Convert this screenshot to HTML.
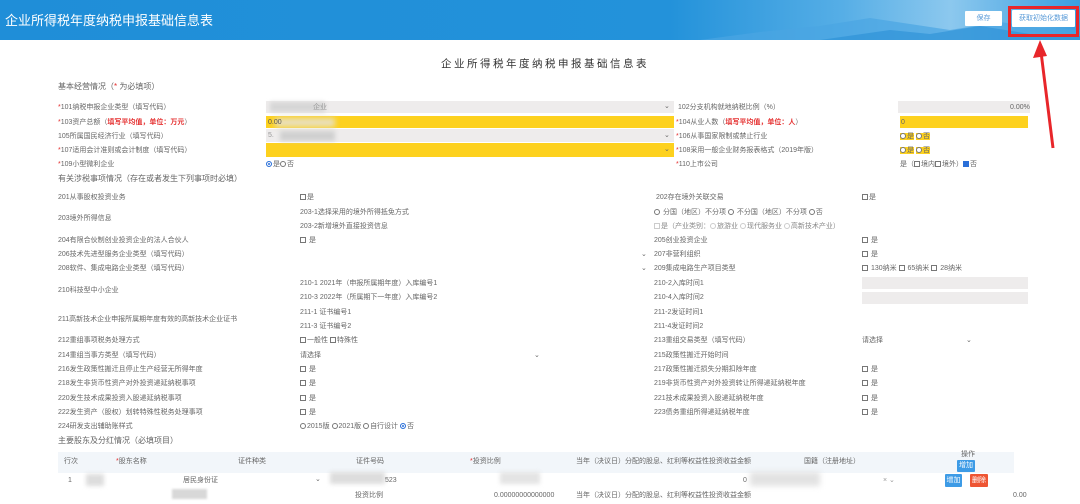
<!DOCTYPE html>
<html><head><meta charset="utf-8"><style>
*{margin:0;padding:0;box-sizing:border-box}
body{width:1080px;height:504px;overflow:hidden;background:#fff;position:relative;font-family:"Liberation Sans","Noto Sans CJK SC",sans-serif;color:#555}
.t{position:absolute;font-size:7px;line-height:10px;white-space:nowrap;color:#666}
.r{color:#e53030}
.b{position:absolute}
.g{background:#eeecec}
.y{background:#fdd11e}
.cb{display:inline-block;width:6px;height:6px;border:1px solid #777;vertical-align:-1px;margin-right:1px;background:#fff}
.rd{display:inline-block;width:6px;height:6px;border:1px solid #777;border-radius:50%;vertical-align:-1px;margin-right:1px;background:#fff}
.rd.on{background:#2a6fd8;border-color:#2a6fd8;box-shadow:inset 0 0 0 1px #fff}
.chev{position:absolute;font-size:7px;color:#666;line-height:10px}
.btn{position:absolute;color:#fff;font-size:7px;line-height:13px;text-align:center;border-radius:1px}
</style></head><body>
<div class="b" style="left:0;top:0;width:1080px;height:40px;background:linear-gradient(90deg,#1f8ed8 0%,#2392da 62%,#56aee6 78%,#8cc8ee 88%,#3a9ee0 100%)"></div>
<svg class="b" style="left:700px;top:0" width="380" height="40"><path d="M0 40 L60 32 L120 26 L170 18 L210 24 L250 30 L300 22 L340 28 L380 30 L380 40Z" fill="#4aa5e2" opacity=".7"/><path d="M120 40 L190 30 L230 34 L280 26 L330 34 L380 36 L380 40Z" fill="#2a8fd6" opacity=".6"/></svg>
<div class="t" style="left:5px;top:12px;font-size:13px;line-height:17px;color:#fff">企业所得税年度纳税申报基础信息表</div>
<div class="btn" style="left:965px;top:11px;width:37px;height:15px;background:#fff;color:#5a9bd8;line-height:15px">保存</div>
<div class="btn" style="left:1012px;top:10px;width:63px;height:17px;background:#fff;color:#5a9bd8;line-height:17px">获取初始化数据</div>
<div class="b" style="left:1008px;top:6px;width:71px;height:31px;border:3px solid #e8262a"></div>
<svg class="b" style="left:1020px;top:36px" width="60" height="120"><path d="M20 8 L33 112" stroke="#e8262a" stroke-width="3"/><path d="M20 4 L13 22 L27 20Z" fill="#e8262a"/></svg>

<div class="t" style="left:441px;top:58px;font-size:10.5px;line-height:13px;color:#333;letter-spacing:2.5px">企业所得税年度纳税申报基础信息表</div>
<div class="t" style="left:58px;top:82px;font-size:8px">基本经营情况（<span class="r">*</span> 为必填项）</div>

<div class="b g" style="left:266px;top:101px;width:408px;height:12px"></div>
<div class="b y" style="left:266px;top:116px;width:408px;height:12px"></div>
<div class="b g" style="left:266px;top:129px;width:408px;height:13px"></div>
<div class="b y" style="left:266px;top:143px;width:408px;height:14px"></div>
<div class="b" style="left:270px;top:102px;width:55px;height:10px;background:#d6d6d6;filter:blur(2px)"></div>
<div class="b" style="left:275px;top:118px;width:60px;height:9px;background:#e8e0c0;filter:blur(3px)"></div>
<div class="b" style="left:280px;top:131px;width:55px;height:10px;background:#d0d0d0;filter:blur(2px)"></div>
<div class="t" style="left:313px;top:103px;color:#999">企业</div>
<div class="t" style="left:268px;top:118px;color:#555">0.00</div>
<div class="t" style="left:268px;top:131px;color:#999">5.</div>
<div class="chev" style="left:664px;top:102px">⌄</div><div class="chev" style="left:664px;top:131px">⌄</div><div class="chev" style="left:664px;top:145px">⌄</div>
<div class="t" style="left:266px;top:160px"><span class="rd on"></span>是<span class="rd"></span>否</div>

<div class="t" style="left:58px;top:103px"><span class="r">*</span>101纳税申报企业类型（填写代码）</div>
<div class="t" style="left:58px;top:118px"><span class="r">*</span>103资产总额（<b class="r">填写平均值，单位：万元</b>）</div>
<div class="t" style="left:58px;top:132px">105所属国民经济行业（填写代码）</div>
<div class="t" style="left:58px;top:146px"><span class="r">*</span>107适用会计准则或会计制度（填写代码）</div>
<div class="t" style="left:58px;top:160px"><span class="r">*</span>109小型微利企业</div>

<div class="t" style="left:678px;top:103px">102分支机构就地纳税比例（%）</div>
<div class="t" style="left:676px;top:118px"><span class="r">*</span>104从业人数（<b class="r">填写平均值，单位：人</b>）</div>
<div class="t" style="left:676px;top:132px"><span class="r">*</span>106从事国家限制或禁止行业</div>
<div class="t" style="left:676px;top:146px"><span class="r">*</span>108采用一般企业财务报表格式（2019年版）</div>
<div class="t" style="left:676px;top:160px"><span class="r">*</span>110上市公司</div>
<div class="b g" style="left:898px;top:101px;width:132px;height:12px"></div>
<div class="t" style="left:1010px;top:103px">0.00%</div>
<div class="b y" style="left:900px;top:116px;width:128px;height:12px"></div>
<div class="t" style="left:901px;top:118px">0</div>
<div class="t" style="left:900px;top:132px"><span style="background:#fdd11e"><span class="rd"></span>是</span> <span style="background:#fdd11e"><span class="rd"></span>否</span></div>
<div class="t" style="left:900px;top:146px"><span style="background:#fdd11e"><span class="rd"></span>是</span> <span style="background:#fdd11e"><span class="rd"></span>否</span></div>
<div class="t" style="left:900px;top:160px">是（<span class="cb"></span>境内<span class="cb"></span>境外）<span class="cb" style="background:#2a6fd8;border-color:#2a6fd8"></span>否</div>

<div class="t" style="left:58px;top:174px;font-size:8px">有关涉税事项情况（存在或者发生下列事项时必填）</div>

<div class="t" style="left:58px;top:193px">201从事股权投资业务</div>
<div class="t" style="left:300px;top:193px"><span class="cb"></span>是</div>
<div class="t" style="left:58px;top:214px">203境外所得信息</div>
<div class="t" style="left:300px;top:208px">203-1选择采用的境外所得抵免方式</div>
<div class="t" style="left:300px;top:222px">203-2新增境外直接投资信息</div>
<div class="t" style="left:58px;top:236px">204有限合伙制创业投资企业的法人合伙人</div>
<div class="t" style="left:300px;top:236px"><span class="cb"></span> 是</div>
<div class="t" style="left:58px;top:250px">206技术先进型服务企业类型（填写代码）</div>
<div class="t" style="left:58px;top:264px">208软件、集成电路企业类型（填写代码）</div>
<div class="t" style="left:58px;top:286px">210科技型中小企业</div>
<div class="t" style="left:300px;top:279px">210-1 2021年（申报所属期年度）入库编号1</div>
<div class="t" style="left:300px;top:293px">210-3 2022年（所属期下一年度）入库编号2</div>
<div class="t" style="left:58px;top:315px">211高新技术企业申报所属期年度有效的高新技术企业证书</div>
<div class="t" style="left:300px;top:308px">211-1 证书编号1</div>
<div class="t" style="left:300px;top:322px">211-3 证书编号2</div>
<div class="t" style="left:58px;top:336px">212重组事项税务处理方式</div>
<div class="t" style="left:300px;top:336px"><span class="cb"></span>一般性 <span class="cb"></span>特殊性</div>
<div class="t" style="left:58px;top:351px">214重组当事方类型（填写代码）</div>
<div class="t" style="left:300px;top:351px">请选择</div>
<div class="chev" style="left:534px;top:351px">⌄</div>
<div class="t" style="left:58px;top:365px">216发生政策性搬迁且停止生产经营无所得年度</div>
<div class="t" style="left:300px;top:365px"><span class="cb"></span> 是</div>
<div class="t" style="left:58px;top:379px">218发生非货币性资产对外投资递延纳税事项</div>
<div class="t" style="left:300px;top:379px"><span class="cb"></span> 是</div>
<div class="t" style="left:58px;top:394px">220发生技术成果投资入股递延纳税事项</div>
<div class="t" style="left:300px;top:394px"><span class="cb"></span> 是</div>
<div class="t" style="left:58px;top:408px">222发生资产（股权）划转特殊性税务处理事项</div>
<div class="t" style="left:300px;top:408px"><span class="cb"></span> 是</div>
<div class="t" style="left:58px;top:422px">224研发支出辅助账样式</div>
<div class="t" style="left:300px;top:422px"><span class="rd"></span>2015版 <span class="rd"></span>2021版 <span class="rd"></span>自行设计 <span class="rd on"></span>否</div>

<div class="t" style="left:656px;top:193px">202存在境外关联交易</div>
<div class="t" style="left:862px;top:193px"><span class="cb"></span>是</div>
<div class="t" style="left:654px;top:208px"><span class="rd"></span> 分国（地区）不分项 <span class="rd"></span> 不分国（地区）不分项 <span class="rd"></span>否</div>
<div class="t" style="left:654px;top:222px;color:#888"><span class="cb" style="border-color:#ccc"></span>是（产业类别：<span class="rd" style="border-color:#ccc"></span>旅游业 <span class="rd" style="border-color:#ccc"></span>现代服务业 <span class="rd" style="border-color:#ccc"></span>高新技术产业）</div>
<div class="t" style="left:654px;top:236px">205创业投资企业</div>
<div class="t" style="left:862px;top:236px"><span class="cb"></span> 是</div>
<div class="chev" style="left:641px;top:250px">⌄</div><div class="chev" style="left:641px;top:264px">⌄</div>
<div class="t" style="left:654px;top:250px">207非营利组织</div>
<div class="t" style="left:862px;top:250px"><span class="cb"></span> 是</div>
<div class="t" style="left:654px;top:264px">209集成电路生产项目类型</div>
<div class="t" style="left:862px;top:264px"><span class="cb"></span> 130纳米 <span class="cb"></span> 65纳米 <span class="cb"></span> 28纳米</div>
<div class="t" style="left:654px;top:279px">210-2入库时间1</div>
<div class="b g" style="left:862px;top:277px;width:166px;height:12px"></div>
<div class="t" style="left:654px;top:293px">210-4入库时间2</div>
<div class="b g" style="left:862px;top:292px;width:166px;height:12px"></div>
<div class="t" style="left:654px;top:308px">211-2发证时间1</div>
<div class="t" style="left:654px;top:322px">211-4发证时间2</div>
<div class="t" style="left:654px;top:336px">213重组交易类型（填写代码）</div>
<div class="t" style="left:862px;top:336px">请选择</div>
<div class="chev" style="left:966px;top:336px">⌄</div>
<div class="t" style="left:654px;top:351px">215政策性搬迁开始时间</div>
<div class="t" style="left:654px;top:365px">217政策性搬迁损失分期扣除年度</div>
<div class="t" style="left:862px;top:365px"><span class="cb"></span> 是</div>
<div class="t" style="left:654px;top:379px">219非货币性资产对外投资转让所得递延纳税年度</div>
<div class="t" style="left:862px;top:379px"><span class="cb"></span> 是</div>
<div class="t" style="left:654px;top:394px">221技术成果投资入股递延纳税年度</div>
<div class="t" style="left:862px;top:394px"><span class="cb"></span> 是</div>
<div class="t" style="left:654px;top:408px">223债务重组所得递延纳税年度</div>
<div class="t" style="left:862px;top:408px"><span class="cb"></span> 是</div>

<div class="t" style="left:58px;top:435px;font-size:8px;line-height:12px">主要股东及分红情况（必填项目）</div>
<div class="b" style="left:58px;top:452px;width:956px;height:21px;background:#f2f6fa"></div>
<div class="t" style="left:64px;top:457px">行次</div>
<div class="t" style="left:116px;top:457px"><span class="r">*</span>股东名称</div>
<div class="t" style="left:238px;top:457px">证件种类</div>
<div class="t" style="left:356px;top:457px">证件号码</div>
<div class="t" style="left:470px;top:457px"><span class="r">*</span>投资比例</div>
<div class="t" style="left:576px;top:457px">当年（决议日）分配的股息、红利等权益性投资收益金额</div>
<div class="t" style="left:804px;top:457px">国籍（注册地址）</div>
<div class="t" style="left:961px;top:450px">操作</div>
<div class="btn" style="left:957px;top:460px;width:18px;height:12px;background:#3d9be6;line-height:12px">增加</div>
<div class="t" style="left:68px;top:476px">1</div>
<div class="b" style="left:86px;top:474px;width:18px;height:12px;background:#ddd;filter:blur(2px)"></div>
<div class="t" style="left:183px;top:476px">居民身份证</div>
<div class="chev" style="left:315px;top:475px">⌄</div>
<div class="b" style="left:330px;top:472px;width:55px;height:12px;background:#ddd;filter:blur(2px)"></div>
<div class="t" style="left:385px;top:476px">523</div>
<div class="b" style="left:500px;top:472px;width:40px;height:12px;background:#e4e4e4;filter:blur(2px)"></div>
<div class="t" style="left:743px;top:476px">0</div>
<div class="b" style="left:750px;top:472px;width:70px;height:14px;background:#e2e2e2;filter:blur(3px)"></div>
<div class="t" style="left:883px;top:476px;color:#999">× ⌄</div>
<div class="btn" style="left:945px;top:474px;width:17px;height:13px;background:#3d9be6">增加</div>
<div class="btn" style="left:970px;top:474px;width:18px;height:13px;background:#ee5533">删除</div>
<div class="b" style="left:172px;top:489px;width:35px;height:10px;background:#d8d8d8;filter:blur(1px)"></div>
<div class="t" style="left:355px;top:491px">投资比例</div>
<div class="t" style="left:494px;top:491px">0.00000000000000</div>
<div class="t" style="left:576px;top:491px">当年（决议日）分配的股息、红利等权益性投资收益金额</div>
<div class="t" style="left:1013px;top:491px">0.00</div>
</body></html>
